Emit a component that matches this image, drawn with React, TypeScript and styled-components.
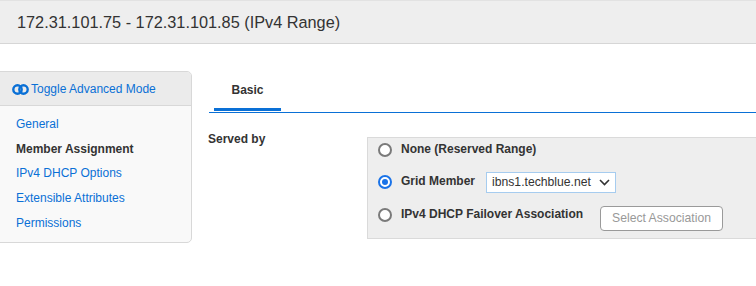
import React from "react";
import styled, { createGlobalStyle } from "styled-components";

const Global = createGlobalStyle`
  html, body { margin: 0; padding: 0; background: #fff; }
  body { font-family: "Liberation Sans", Arial, sans-serif; color: #333; overflow: hidden; }
  * { box-sizing: border-box; }
`;

const Header = styled.header`
  height: 44px;
  background: #eeeeee;
  border-top: 1px solid #e2e2e2;
  border-bottom: 1px solid #d6d6d6;
  display: flex;
  align-items: center;
  padding: 1px 0 0 17px;
  font-size: 16.3px;
  color: #333;
`;

const Main = styled.div`
  display: flex;
  align-items: flex-start;
  padding-top: 27px;
`;

const Sidebar = styled.nav`
  width: 194px;
  margin-left: -2px;
  border: 1px solid #d8d8d8;
  border-radius: 0 5px 5px 0;
  background: #f9f9f9;
  overflow: hidden;
`;

const SideHeader = styled.div`
  height: 34px;
  background: #ebebeb;
  border-bottom: 1px solid #d8d8d8;
  display: flex;
  align-items: center;
  padding-left: 13px;
  padding-top: 1px;
  gap: 2px;
  color: #0a70d6;
  font-size: 12px;
`;

const SideList = styled.ul`
  list-style: none;
  margin: 0;
  padding: 6px 0 7px 17px;
  display: flex;
  flex-direction: column;
`;

const SideItem = styled.li<{ $active?: boolean }>`
  height: 24.6px;
  display: flex;
  align-items: center;
  font-size: 12px;
  color: ${(p) => (p.$active ? "#333" : "#0a70d6")};
  font-weight: ${(p) => (p.$active ? 700 : 400)};
`;

const Content = styled.section`
  flex: 1;
  margin-left: 16px;
`;

const TabBar = styled.div`
  display: flex;
  border-bottom: 1px solid #0a70d6;
  padding-left: 5px;
  margin-left: 1px;
`;

const Tab = styled.div<{ $active?: boolean }>`
  width: 67px;
  height: 40px;
  display: flex;
  align-items: center;
  justify-content: center;
  padding-top: 1px;
  font-size: 12px;
  font-weight: 700;
  color: #333;
  border-bottom: 3px solid ${(p) => (p.$active ? "#0a70d6" : "transparent")};
  margin-bottom: 1px;
`;

const FormRow = styled.div`
  display: flex;
  align-items: flex-start;
  margin-top: 17px;
`;

const FieldLabel = styled.div`
  width: 159px;
  padding-top: 2px;
  font-size: 12px;
  font-weight: 700;
  color: #333;
`;

const OptionBox = styled.div`
  flex: 1;
  margin-right: -10px;
  margin-top: 7px;
  background: #eeeeee;
  border: 1px solid #dadada;
  padding: 0 0 10px 10px;
  display: flex;
  flex-direction: column;
`;

const OptionRow = styled.div<{ $h: number }>`
  height: ${(p) => p.$h}px;
  display: flex;
  align-items: center;
`;

const Radio = styled.span<{ $checked?: boolean }>`
  width: 14px;
  height: 14px;
  border-radius: 50%;
  border: 2px solid ${(p) => (p.$checked ? "#1a73e8" : "#7a7a7a")};
  background: #fff;
  display: inline-flex;
  align-items: center;
  justify-content: center;
  flex: none;
  &::after {
    content: "";
    width: 6px;
    height: 6px;
    border-radius: 50%;
    background: ${(p) => (p.$checked ? "#1a73e8" : "transparent")};
  }
`;

const OptionLabel = styled.span<{ $w?: number }>`
  margin-left: 9px;
  font-size: 12px;
  font-weight: 700;
  color: #333;
  width: ${(p) => (p.$w ? `${p.$w}px` : "auto")};
  margin-top: -3px;
  flex: none;
`;

const Select = styled.div`
  width: 130px;
  height: 21px;
  border: 1px solid #a6ccef;
  background: #fff;
  display: flex;
  align-items: center;
  justify-content: space-between;
  padding: 0 5px 0 5px;
  font-size: 12.2px;
  color: #333;
`;

const Button = styled.div`
  width: 123px;
  height: 25px;
  border: 1px solid #9a9a9a;
  border-radius: 4px;
  background: #fff;
  display: flex;
  align-items: center;
  justify-content: center;
  font-size: 12.2px;
  color: #999;
  margin-top: 6px;
`;

const ToggleIcon = () => (
  <svg width="17" height="11" viewBox="0 0 17 11">
    <circle cx="5.5" cy="5.5" r="4.2" fill="none" stroke="#0a70d6" strokeWidth="2.4" />
    <circle cx="11.5" cy="5.5" r="4.2" fill="none" stroke="#0a70d6" strokeWidth="2.4" />
  </svg>
);

const Chevron = () => (
  <svg width="11" height="7" viewBox="0 0 11 7">
    <path d="M1 1 L5.5 5.5 L10 1" fill="none" stroke="#333" strokeWidth="1.6" />
  </svg>
);

export default function App() {
  return (
    <>
      <Global />
      <Header>172.31.101.75 - 172.31.101.85 (IPv4 Range)</Header>
      <Main>
        <Sidebar>
          <SideHeader>
            <ToggleIcon />
            <span>Toggle Advanced Mode</span>
          </SideHeader>
          <SideList>
            <SideItem>General</SideItem>
            <SideItem $active>Member Assignment</SideItem>
            <SideItem>IPv4 DHCP Options</SideItem>
            <SideItem>Extensible Attributes</SideItem>
            <SideItem>Permissions</SideItem>
          </SideList>
        </Sidebar>
        <Content>
          <TabBar>
            <Tab $active>Basic</Tab>
          </TabBar>
          <FormRow>
            <FieldLabel>Served by</FieldLabel>
            <OptionBox>
              <OptionRow $h={24}>
                <Radio />
                <OptionLabel>None (Reserved Range)</OptionLabel>
              </OptionRow>
              <OptionRow $h={40}>
                <Radio $checked />
                <OptionLabel $w={85}>Grid Member</OptionLabel>
                <Select>
                  <span>ibns1.techblue.net</span>
                  <Chevron />
                </Select>
              </OptionRow>
              <OptionRow $h={26}>
                <Radio />
                <OptionLabel $w={199}>IPv4 DHCP Failover Association</OptionLabel>
                <Button>Select Association</Button>
              </OptionRow>
            </OptionBox>
          </FormRow>
        </Content>
      </Main>
    </>
  );
}
